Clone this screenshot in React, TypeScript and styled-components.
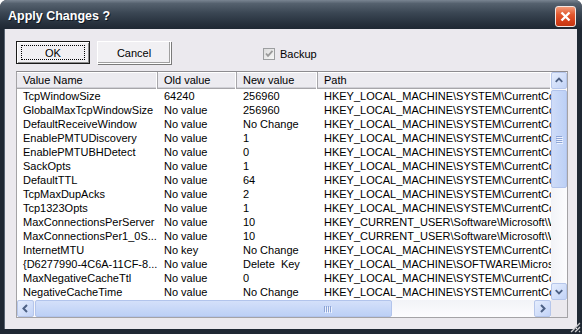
import styled, { createGlobalStyle } from 'styled-components'

const GlobalStyle = createGlobalStyle`
  html, body {
    margin: 0;
    padding: 0;
    background: #ffffff;
  }
  body {
    font-family: "Liberation Sans", Arial, sans-serif;
    font-size: 11px;
    color: #000;
  }
`

const Window = styled.div`
  position: relative;
  width: 582px;
  height: 334px;
  display: flex;
  flex-direction: column;
  background: #1f2833;
  border-radius: 7px 7px 0 0;
  overflow: hidden;
`

const TitleBar = styled.div`
  height: 29px;
  flex-shrink: 0;
  display: flex;
  align-items: center;
  justify-content: space-between;
  padding: 0 6px 0 8px;
  background: linear-gradient(to bottom, #7a8592 0%, #55616e 12%, #3a4653 45%, #27313d 80%, #1f2833 100%);
`

const Title = styled.span`
  font-family: "Liberation Sans", Arial, sans-serif;
  font-weight: bold;
  font-size: 12.5px;
  color: #ffffff;
  padding-top: 3px;
  text-shadow: 1px 1px 0 #111922;
`

const CloseButton = styled.div`
  width: 19px;
  height: 19px;
  margin-top: 3px;
  border: 1px solid #f4e6e2;
  border-radius: 3px;
  display: flex;
  align-items: center;
  justify-content: center;
  background: linear-gradient(to bottom, #f39a78 0%, #e2582f 40%, #d4401a 75%, #c53612 100%);
`

const Body = styled.div`
  flex: 1;
  margin: 0 5px 5px 4px;
  padding: 12px 0 0 11px;
  background: #ebe9ee;
  border-left: 1px solid #596472;
  display: flex;
  flex-direction: column;
`

const Toolbar = styled.div`
  display: flex;
  align-items: center;
  gap: 7px;
  height: 23px;
`

const Button = styled.div<{ $default?: boolean }>`
  box-sizing: border-box;
  width: 74px;
  height: 23px;
  display: flex;
  align-items: center;
  justify-content: center;
  font-size: 11px;
  background: #f1f0f3;
  border: 1px solid ${({ $default }) => ($default ? '#1a1a1a' : '#ffffff')};
  box-shadow: ${({ $default }) =>
    $default
      ? 'inset 1px 1px 0 #ffffff, inset -1px -1px 0 #8c8c8c'
      : 'inset -1px -1px 0 #a0a0a0, 1px 1px 0 #7a7a7a'};
`

const FocusRing = styled.span`
  box-sizing: border-box;
  width: 64px;
  height: 15px;
  border: 1px dotted #000;
  display: flex;
  align-items: center;
  justify-content: center;
`

const CheckLabel = styled.label`
  display: flex;
  align-items: center;
  gap: 5px;
  margin-left: 85px;
  margin-top: 2px;
`

const CheckBox = styled.span`
  box-sizing: border-box;
  width: 12px;
  height: 12px;
  border: 1px solid #9c9ea0;
  background: linear-gradient(to bottom right, #dcdcdc, #f7f7f7);
  display: flex;
  align-items: center;
  justify-content: center;
`

const ListView = styled.div`
  box-sizing: border-box;
  margin-top: 7px;
  width: 552px;
  height: 247px;
  border: 1px solid #a4a3a6;
  border-top-color: #8d8c90;
  background: #ffffff;
  display: grid;
  grid-template-columns: 1fr 16px;
  grid-template-rows: 1fr 17px;
`

const Content = styled.div`
  overflow: hidden;
`

const Row = styled.div`
  display: grid;
  grid-template-columns: 141px 79px 81px 1fr;
  height: 14px;
  line-height: 14px;
  white-space: pre;
`

const HeaderRow = styled(Row)`
  height: 17px;
  line-height: 17px;
  background: #ecebf0;
  box-shadow: inset 0 1px 0 #ffffff, inset 0 -1px 0 #a7a6aa, inset 0 -2px 0 #d0d0d6;
`

const HeaderCell = styled.div`
  padding-left: 6px;
  overflow: hidden;
  border-right: 1px solid #a7a6aa;
  box-shadow: inset -1px 0 0 #ffffff;
  &:last-child {
    border-right: none;
  }
`

const Cell = styled.div`
  padding-left: 6px;
  overflow: hidden;
`

const VScroll = styled.div`
  display: flex;
  flex-direction: column;
  background: linear-gradient(to right, #f2f3f7, #fcfcfe);
`

const HScroll = styled.div`
  display: flex;
  background: linear-gradient(to bottom, #f2f3f7, #fcfcfe);
`

const ScrollButton = styled.div`
  box-sizing: border-box;
  width: ${({ theme }) => (theme && (theme as { w?: number }).w) || 16}px;
  flex-shrink: 0;
  display: flex;
  align-items: center;
  justify-content: center;
  border: 1px solid #b6c6ea;
  border-radius: 2px;
  background: linear-gradient(to bottom right, #e5edfd, #c2d3f7);
`

const VButton = styled(ScrollButton)`
  width: 16px;
  height: 17px;
`

const HButton = styled(ScrollButton)`
  width: 17px;
  height: 17px;
`

const VTrack = styled.div`
  flex: 1;
  padding-top: 1px;
`

const HTrack = styled.div`
  flex: 1;
  padding-left: 1px;
  display: flex;
`

const Thumb = styled.div<{ $vertical?: boolean }>`
  box-sizing: border-box;
  display: flex;
  align-items: center;
  border: 1px solid #b2c4ec;
  border-radius: 2px;
  background: ${({ $vertical }) =>
    $vertical
      ? 'linear-gradient(to right, #cfdcf8, #bcd0f6)'
      : 'linear-gradient(to bottom, #d4e0fa, #bcd0f6)'};
  ${({ $vertical }) =>
    $vertical
      ? 'width: 16px; height: 98px; justify-content: center;'
      : 'width: 357px; height: 17px; justify-content: flex-end; padding-right: 60px;'}
`

const Grip = styled.div<{ $vertical?: boolean }>`
  display: flex;
  flex-direction: ${({ $vertical }) => ($vertical ? 'column' : 'row')};
  gap: 1px;
  span {
    display: block;
    background: #8ea5d6;
    box-shadow: 1px 1px 0 #eef3fe;
    ${({ $vertical }) => ($vertical ? 'width: 6px; height: 1px;' : 'width: 1px; height: 6px;')}
  }
`

const Corner = styled.div`
  background: #ebe9ee;
`

const SizeGrip = styled.svg`
  position: absolute;
  right: 1px;
  bottom: 1px;
`

type Entry = [string, string, string, string]

const entries: Entry[] = [
  ['TcpWindowSize', '64240', '256960', 'HKEY_LOCAL_MACHINE\\SYSTEM\\CurrentControlSet\\Services\\Tcpip\\Parameters'],
  ['GlobalMaxTcpWindowSize', 'No value', '256960', 'HKEY_LOCAL_MACHINE\\SYSTEM\\CurrentControlSet\\Services\\Tcpip\\Parameters'],
  ['DefaultReceiveWindow', 'No value', 'No Change', 'HKEY_LOCAL_MACHINE\\SYSTEM\\CurrentControlSet\\Services\\AFD\\Parameters'],
  ['EnablePMTUDiscovery', 'No value', '1', 'HKEY_LOCAL_MACHINE\\SYSTEM\\CurrentControlSet\\Services\\Tcpip\\Parameters'],
  ['EnablePMTUBHDetect', 'No value', '0', 'HKEY_LOCAL_MACHINE\\SYSTEM\\CurrentControlSet\\Services\\Tcpip\\Parameters'],
  ['SackOpts', 'No value', '1', 'HKEY_LOCAL_MACHINE\\SYSTEM\\CurrentControlSet\\Services\\Tcpip\\Parameters'],
  ['DefaultTTL', 'No value', '64', 'HKEY_LOCAL_MACHINE\\SYSTEM\\CurrentControlSet\\Services\\Tcpip\\Parameters'],
  ['TcpMaxDupAcks', 'No value', '2', 'HKEY_LOCAL_MACHINE\\SYSTEM\\CurrentControlSet\\Services\\Tcpip\\Parameters'],
  ['Tcp1323Opts', 'No value', '1', 'HKEY_LOCAL_MACHINE\\SYSTEM\\CurrentControlSet\\Services\\Tcpip\\Parameters'],
  ['MaxConnectionsPerServer', 'No value', '10', 'HKEY_CURRENT_USER\\Software\\Microsoft\\Windows\\CurrentVersion\\Internet Settings'],
  ['MaxConnectionsPer1_0S...', 'No value', '10', 'HKEY_CURRENT_USER\\Software\\Microsoft\\Windows\\CurrentVersion\\Internet Settings'],
  ['InternetMTU', 'No key', 'No Change', 'HKEY_LOCAL_MACHINE\\SYSTEM\\CurrentControlSet\\Services\\Tcpip\\Parameters'],
  ['{D6277990-4C6A-11CF-8...', 'No value', 'Delete  Key', 'HKEY_LOCAL_MACHINE\\SOFTWARE\\Microsoft\\Windows\\CurrentVersion'],
  ['MaxNegativeCacheTtl', 'No value', '0', 'HKEY_LOCAL_MACHINE\\SYSTEM\\CurrentControlSet\\Services\\Dnscache\\Parameters'],
  ['NegativeCacheTime', 'No value', 'No Change', 'HKEY_LOCAL_MACHINE\\SYSTEM\\CurrentControlSet\\Services\\Dnscache\\Parameters'],
]

const Chevron = ({ dir }: { dir: 'up' | 'down' | 'left' | 'right' }) => {
  const d = {
    up: 'M4 9 L7.5 5.5 L11 9',
    down: 'M4 6 L7.5 9.5 L11 6',
    left: 'M9 4 L5.5 7.5 L9 11',
    right: 'M6 4 L9.5 7.5 L6 11',
  }[dir]
  return (
    <svg width="15" height="15" viewBox="0 0 15 15">
      <path d={d} fill="none" stroke="#4d6185" strokeWidth="2" />
    </svg>
  )
}

const Lines = ({ vertical }: { vertical?: boolean }) => (
  <Grip $vertical={vertical}>
    <span />
    <span />
    <span />
    <span />
  </Grip>
)

export default function App() {
  return (
    <>
      <GlobalStyle />
      <Window>
        <TitleBar>
          <Title>Apply Changes ?</Title>
          <CloseButton>
            <svg width="13" height="13" viewBox="0 0 13 13">
              <path d="M2.5 2.5 L10.5 10.5 M10.5 2.5 L2.5 10.5" stroke="#ffffff" strokeWidth="2.4" />
            </svg>
          </CloseButton>
        </TitleBar>
        <Body>
          <Toolbar>
            <Button $default>
              <FocusRing>OK</FocusRing>
            </Button>
            <Button>Cancel</Button>
            <CheckLabel>
              <CheckBox>
                <svg width="10" height="10" viewBox="0 0 10 10">
                  <path d="M2 4.5 L4 6.8 L8.5 1.8" fill="none" stroke="#9a9a9a" strokeWidth="1.8" />
                </svg>
              </CheckBox>
              Backup
            </CheckLabel>
          </Toolbar>
          <ListView>
            <Content>
              <HeaderRow>
                <HeaderCell>Value Name</HeaderCell>
                <HeaderCell>Old value</HeaderCell>
                <HeaderCell>New value</HeaderCell>
                <HeaderCell>Path</HeaderCell>
              </HeaderRow>
              {entries.map((e, i) => (
                <Row key={i}>
                  {e.map((c, j) => (
                    <Cell key={j}>{c}</Cell>
                  ))}
                </Row>
              ))}
            </Content>
            <VScroll>
              <VButton>
                <Chevron dir="up" />
              </VButton>
              <VTrack>
                <Thumb $vertical>
                  <Lines vertical />
                </Thumb>
              </VTrack>
              <VButton>
                <Chevron dir="down" />
              </VButton>
            </VScroll>
            <HScroll>
              <HButton>
                <Chevron dir="left" />
              </HButton>
              <HTrack>
                <Thumb>
                  <Lines />
                </Thumb>
              </HTrack>
              <HButton>
                <Chevron dir="right" />
              </HButton>
            </HScroll>
            <Corner />
          </ListView>
        </Body>
        <SizeGrip width="13" height="13" viewBox="0 0 13 13">
          <path d="M12 3 L3 12 M12 7 L7 12 M12 11 L11 12" stroke="#c9c9cc" strokeWidth="1.2" />
          <path d="M12 4 L4 12 M12 8 L8 12" stroke="#7d8188" strokeWidth="1" />
        </SizeGrip>
      </Window>
    </>
  )
}
